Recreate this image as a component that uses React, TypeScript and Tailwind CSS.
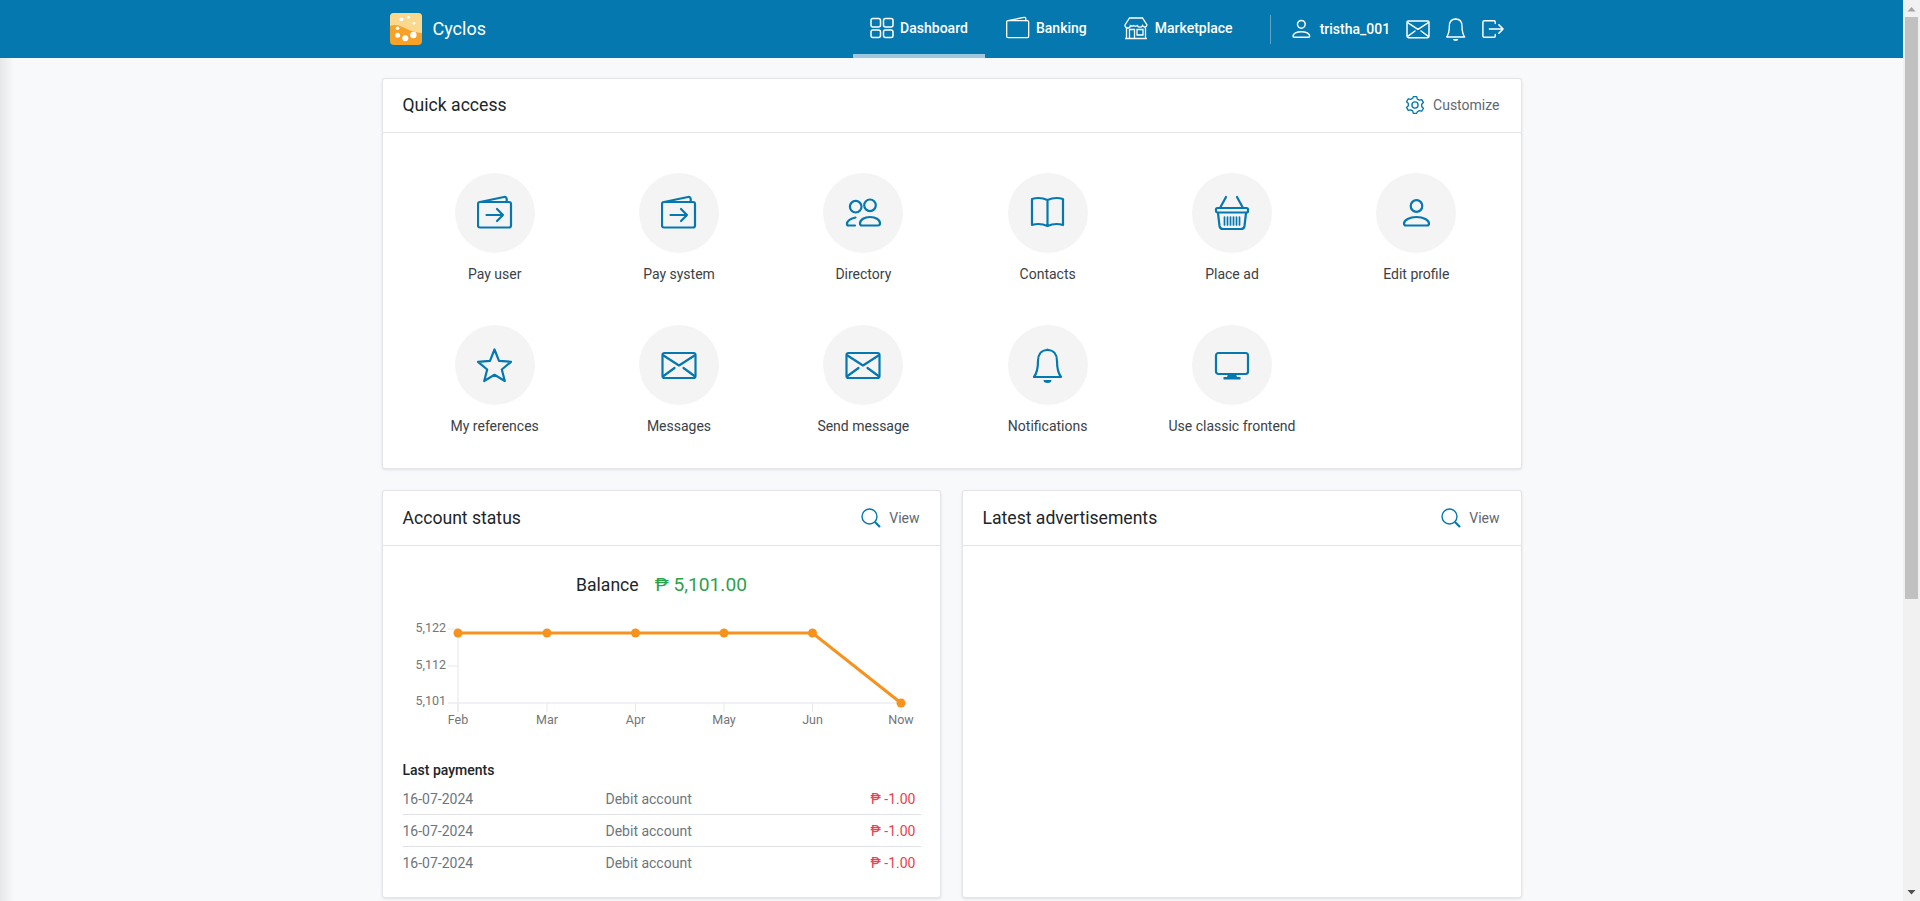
import type { ReactNode } from "react";

const FONT = "font-['Roboto','Noto_Sans',sans-serif]";

function Icon({ size = 36, sw = 2.2, children }: { size?: number; sw?: number; children: ReactNode }) {
  return (
    <svg
      width={size}
      height={size}
      viewBox="0 0 36 36"
      fill="none"
      stroke="currentColor"
      strokeWidth={sw}
      strokeLinecap="round"
      strokeLinejoin="round"
      className="shrink-0"
    >
      {children}
    </svg>
  );
}

type P = { size?: number; sw?: number };

const Wallet = ({ arrow, ...p }: P & { arrow?: boolean }) => (
  <Icon {...p}>
    <rect x="1" y="7" width="33" height="25.5" rx="2" />
    <path d="M3 7 27 2q2.5-.4 2.7 2V7" />
    {arrow && <path d="M9.5 20H26M20 14l6 6-6 6" />}
  </Icon>
);
const People = (p: P) => (
  <Icon {...p}>
    <circle cx="10.7" cy="11.7" r="5.8" />
    <circle cx="25" cy="10.3" r="5.8" />
    <path d="M15 28.5c0-4 4.5-6.5 10-6.5s10 2.500 10 6.500q0 2-2 2H17q-2 0-2-2Z" />
    <path d="M10.500 22.500C6 23.500 2 26 2 29q0 1.500 1.500 1.500H10" />
  </Icon>
);
const Book = (p: P) => (
  <Icon {...p}>
    <path d="M17.500 5C13 3 7 2.500 2 4v26c5-1.500 11-1 15.500 1 4.500-2 10.500-2.500 15.500-1V4c-5-1.500-11-1-15.500 1Zm0 0v26" />
  </Icon>
);
const Basket = (p: P) => (
  <Icon {...p}>
    <rect x="2" y="13" width="32" height="4.500" rx="1.500" />
    <path d="M12 2 6 13M23 2l6 11" />
    <path d="M4 18l1.500 13q.5 3 3.500 3h18q3 0 3.500-3L32 18" />
    <path d="M10.500 22v8M13.500 22v8M16.500 22v8M19.500 22v8M22.500 22v8M25.500 22v8" strokeWidth="1.700" />
  </Icon>
);
const User = (p: P) => (
  <Icon {...p}>
    <circle cx="18.500" cy="11" r="5.800" />
    <path d="M6 28.500c0-3.500 5.500-6.500 12.500-6.500S31 25 31 28.500q0 2-2 2H8q-2 0-2-2Z" />
  </Icon>
);
const Star = (p: P) => (
  <Icon {...p}>
    <path d="M17.500 2.500 22 13.800l12 1-9.200 7.700 3 11.500-10.300-6.200L7.200 34l3-11.500L1 14.800l12-1Z" />
  </Icon>
);
const Mail = (p: P) => (
  <Icon {...p}>
    <rect x="1.500" y="6" width="33" height="25" rx="2" />
    <path d="M2.500 8.500 18 18.500 33.500 8.500M2.500 29l11-8M33.500 29l-11-8" />
  </Icon>
);
const Bell = (p: P) => (
  <Icon {...p}>
    <path d="M17.500 3C11 3 8 8 8 14c0 7-1 12-4 16h27c-3-4-4-9-4-16 0-6-3-11-9.500-11Z" />
    <path d="M13.500 33h8a4 3 0 0 1-8 0Z" fill="currentColor" stroke="none" />
    <circle cx="17.500" cy="2.500" r="1" fill="currentColor" stroke="none" />
  </Icon>
);
const Monitor = (p: P) => (
  <Icon {...p}>
    <rect x="2" y="6" width="32" height="21" rx="2.500" />
    <path d="M14 27h8l1 3h3.500v2.500h-17V30H13Z" fill="currentColor" stroke="none" />
  </Icon>
);
const Gear = (p: P) => (
  <Icon {...p}>
    <circle cx="18" cy="18" r="5.500" />
    <path d="M15 3h6l1.200 4.300 3.600 2 4.300-1.100 3 5.200-3.100 3.200v4.200l3.100 3.200-3 5.200-4.300-1.100-3.600 2L21 33h-6l-1.200-4.300-3.600-2-4.300 1.100-3-5.200L6 19.400v-4.200L2.900 12l3-5.200 4.300 1.100 3.600-2Z" />
  </Icon>
);
const Search = () => (
  <svg width="20" height="20" viewBox="0 0 20 20" fill="none" stroke="currentColor" className="shrink-0">
    <circle cx="8.500" cy="8.500" r="7.500" strokeWidth="1.400" />
    <path d="M14 14l5 5" strokeWidth="2.200" />
  </svg>
);
const Grid = () => (
  <svg width="24" height="24" viewBox="0 0 24 24" fill="none" stroke="currentColor" strokeWidth="1.500" className="shrink-0">
    <rect x="1" y="2.500" width="9.500" height="8.500" rx="2" />
    <rect x="13.500" y="2.500" width="9.500" height="8.500" rx="2" />
    <rect x="1" y="14" width="9.500" height="7.500" rx="2" />
    <rect x="13.500" y="14" width="9.500" height="7.500" rx="2" />
  </svg>
);
const Shop = () => (
  <svg width="24" height="24" viewBox="0 0 24 24" fill="none" stroke="currentColor" strokeWidth="1.300" className="shrink-0">
    <path d="M5.500 2h13L23 9a2.300 2.300 0 0 1-4.400.6 3 3 0 0 1-5.300 0 3 3 0 0 1-3.600 0 3 3 0 0 1-3.300 0A2.300 2.300 0 0 1 1 9Z" />
    <path d="M2.500 11.500V22.500h19V11.500M1 22.500h22M5.500 22.500v-9h5v9M13 13.500h6v5.500h-6Z" />
  </svg>
);
const Logout = () => (
  <svg width="22" height="22" viewBox="0 0 24 24" fill="none" stroke="currentColor" strokeWidth="1.600" strokeLinecap="round" strokeLinejoin="round" className="shrink-0">
    <path d="M14.500 6V4.500q0-1.500-1.500-1.500H2.500Q1 3 1 4.500v15Q1 21 2.500 21H13q1.500 0 1.500-1.500V18" />
    <path d="M8 12h15M18.500 7.500 23 12l-4.500 4.500" />
  </svg>
);
const Logo = () => (
  <svg width="32" height="32" viewBox="0 0 32 32" className="shrink-0">
    <rect width="32" height="32" rx="4" fill="#f7a128" />
    <path d="M0 13C10 9 18 20 32 20V4a4 4 0 0 0-4-4H4a4 4 0 0 0-4 4Z" fill="#fad88d" />
    <g fill="#fff">
      <circle cx="7.600" cy="15.300" r="1.800" />
      <circle cx="7.600" cy="22.300" r="2.500" />
      <circle cx="15.300" cy="25.300" r="3" />
      <circle cx="23.400" cy="22" r="3.200" />
      <circle cx="11.500" cy="6.300" r="1.900" />
      <circle cx="18.400" cy="4.300" r="1.500" />
      <circle cx="24" cy="10.300" r="1.400" />
    </g>
  </svg>
);

const quick: { label: string; icon: ReactNode }[] = [
  { label: "Pay user", icon: <Wallet arrow /> },
  { label: "Pay system", icon: <Wallet arrow /> },
  { label: "Directory", icon: <People /> },
  { label: "Contacts", icon: <Book /> },
  { label: "Place ad", icon: <Basket /> },
  { label: "Edit profile", icon: <User /> },
  { label: "My references", icon: <Star /> },
  { label: "Messages", icon: <Mail /> },
  { label: "Send message", icon: <Mail /> },
  { label: "Notifications", icon: <Bell /> },
  { label: "Use classic frontend", icon: <Monitor /> },
];

const months = ["Feb", "Mar", "Apr", "May", "Jun", "Now"];
const xs = [55, 144, 232.500, 321, 409.500, 498];
const ys = [10, 10, 10, 10, 10, 80];

function Chart() {
  const pts = xs.map((x, i) => `${x},${ys[i]}`).join(" ");
  return (
    <svg width="518" height="116" viewBox="0 -6 518 116" className="block font-['Roboto',sans-serif] text-[12.5px]">
      <g stroke="#eceef2" strokeWidth="1.500" fill="none">
        <path d="M55 6v83M45 80h460" />
      </g>
      <g stroke="#e6e8ec" fill="none">
        <path d="M45 6h10M45 43h10" />
        {xs.map((x) => (
          <path key={x} d={`M${x} 80v9`} />
        ))}
      </g>
      <g fill="#757575" textAnchor="end">
        <text x="43" y="9">5,122</text>
        <text x="43" y="46">5,112</text>
        <text x="43" y="82">5,101</text>
      </g>
      <g fill="#757575" textAnchor="middle">
        {months.map((m, i) => (
          <text key={m} x={xs[i]} y="101">
            {m}
          </text>
        ))}
      </g>
      <polyline points={pts} fill="none" stroke="#f6931e" strokeWidth="3" />
      {xs.map((x, i) => (
        <circle key={x} cx={x} cy={ys[i]} r="4.500" fill="#f6931e" />
      ))}
    </svg>
  );
}

function CardHeader({ title, tall, children }: { title: string; tall?: boolean; children: ReactNode }) {
  return (
    <div className={`${tall ? "h-[55px]" : "h-[54px]"} flex items-center justify-between pl-[20px] pr-[21px] border-b border-[#e3e5e9]`}>
      <h2 className="text-[17.6px] text-[#212529]">{title}</h2>
      {children}
    </div>
  );
}

function HeadAction({ icon, label }: { icon: ReactNode; label: string }) {
  return (
    <a className="flex items-center gap-[8px] text-sm text-[#5f6770] pb-[1px]">
      <span className="text-[#0478af]">{icon}</span>
      {label}
    </a>
  );
}

const card = "bg-white rounded-[3px] border border-[#e3e5e9] shadow-[0_1px_3px_rgba(0,0,0,0.1)]";

export default function App() {
  return (
    <div className={`h-screen flex overflow-hidden bg-[#f8f9fb] ${FONT}`}>
      <div className="flex-1 min-w-0 bg-[linear-gradient(90deg,#e6e7e9,#f8f9fb_14px)]">
        <header className="h-[58px] bg-[#0478af] text-white">
          <div className="w-[1140px] mx-auto h-full flex items-center pl-[8px]">
            <Logo />
            <span className="ml-[11px] text-[18px] pb-[1px]">Cyclos</span>
            <nav className="ml-[367px] flex gap-[5px] h-full text-sm font-medium">
              <a className="h-full w-[132px] flex items-center justify-center gap-[6px] border-b-4 border-[#9fc8de] pt-[2px]">
                <Grid />
                Dashboard
              </a>
              <a className="h-full px-[16px] flex items-center gap-[6px] pb-[2px]">
                <Wallet size={24} sw={2} />
                Banking
              </a>
              <a className="h-full px-[16px] flex items-center gap-[7px] pb-[2px]">
                <Shop />
                Marketplace
              </a>
            </nav>
            <div className="ml-[21px] w-px h-[29px] shrink-0 bg-[#5fa7ca]" />
            <div className="ml-[18px] flex items-center text-sm font-medium pb-[1px]">
              <User size={24} sw={2.200} />
              <span className="ml-[7px]">tristha_001</span>
              <span className="ml-[16px]"><Mail size={24} sw={2.200} /></span>
              <span className="ml-[14px]"><Bell size={24} sw={2} /></span>
              <span className="ml-[14px]"><Logout /></span>
            </div>
          </div>
        </header>

        <main className="w-[1140px] mx-auto pt-[20px] flex flex-col gap-[21px]">
          <section className={card}>
            <CardHeader title="Quick access">
              <HeadAction icon={<Gear size={20} sw={2.400} />} label="Customize" />
            </CardHeader>
            <div className="grid grid-cols-6 auto-rows-[112px] gap-y-[40px] pt-[40px] pb-[31px] pl-[20px] pr-[12px]">
              {quick.map((q) => (
                <div key={q.label} className="flex flex-col items-center">
                  <div className="w-[80px] h-[80px] rounded-full bg-[#f4f4f4] flex items-center justify-center text-[#0478af]">
                    {q.icon}
                  </div>
                  <span className="mt-[11px] text-sm text-[#3b4147]">{q.label}</span>
                </div>
              ))}
            </div>
          </section>

          <div className="grid grid-cols-[559px_560px] gap-[21px]">
            <section className={`${card} h-[408px]`}>
              <CardHeader title="Account status" tall>
                <div className="-mr-[1px]">
                  <HeadAction icon={<Search />} label="View" />
                </div>
              </CardHeader>
              <div className="pl-[20px] pr-[19px] pt-[26px]">
                <div className="flex items-center justify-center gap-[16px] h-[26px] text-[17.6px] text-[#212529]">
                  Balance
                  <span className="text-[19.2px] text-[#2ba24c]">₱ 5,101.00</span>
                </div>
                <div className="mt-[19px]">
                  <Chart />
                </div>
                <h3 className="mt-[27px] text-sm font-medium text-[#212529] leading-[20px]">Last payments</h3>
                <div className="mt-[3px] text-sm text-[#6c757d]">
                  {[0, 1, 2].map((i) => (
                    <div
                      key={i}
                      className="h-[32px] flex items-center border-b border-[#dfe1e4] last:border-b-0"
                    >
                      <span className="w-[203px]">16-07-2024</span>
                      <span className="flex-1">Debit account</span>
                      <span className="pr-[5px] text-[#e8414f]">₱ -1.00</span>
                    </div>
                  ))}
                </div>
              </div>
            </section>
            <section className={`${card} h-[408px]`}>
              <CardHeader title="Latest advertisements" tall>
                <HeadAction icon={<Search />} label="View" />
              </CardHeader>
            </section>
          </div>
        </main>
      </div>

      <div className="w-[17px] shrink-0 bg-[#f1f1f1] flex flex-col items-center">
        <svg width="9" height="17" viewBox="0 0 9 17" className="shrink-0" fill="#a3a3a3">
          <path d="M4.500 7 8.500 11.500H0.500Z" />
        </svg>
        <div className="w-[13px] h-[582px] bg-[#c1c1c1]" />
        <div className="flex-1" />
        <svg width="9" height="17" viewBox="0 0 9 17" className="shrink-0" fill="#505050">
          <path d="M0.500 6H8.500L4.500 10.500Z" />
        </svg>
      </div>
    </div>
  );
}
